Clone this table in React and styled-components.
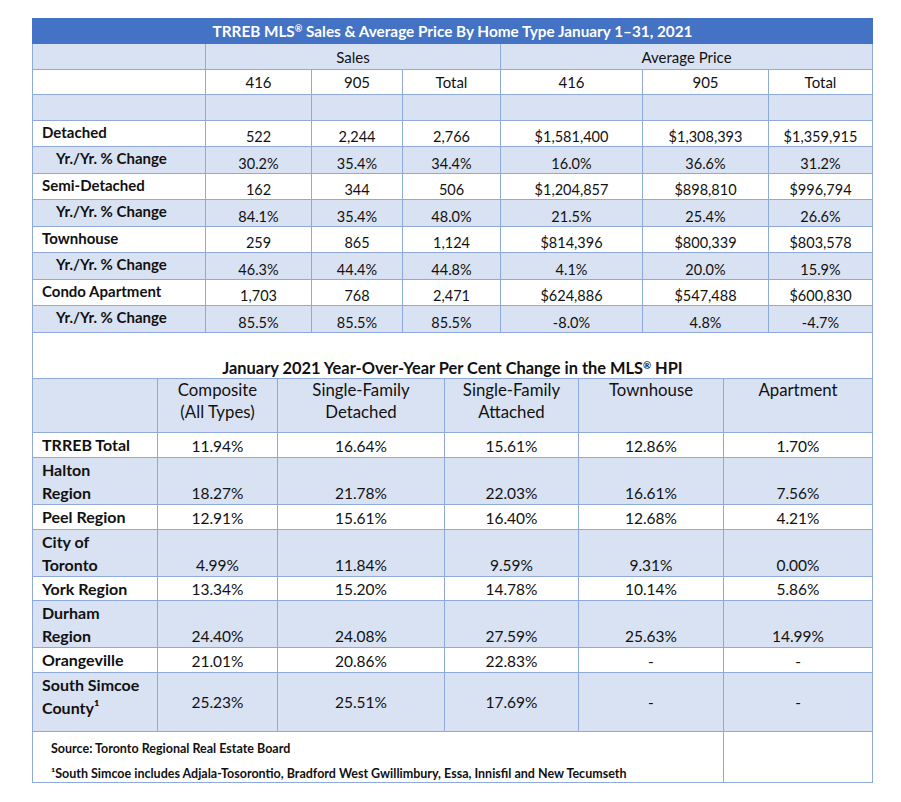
import styled, { createGlobalStyle } from "styled-components";

const GlobalStyle = createGlobalStyle`
  body {
    margin: 0;
    background: #ffffff;
    font-family: Lato, "Open Sans", sans-serif;
    color: #111111;
  }
`;

const salesRows = [
  { label: "Detached", values: ["522", "2,244", "2,766", "$1,581,400", "$1,308,393", "$1,359,915"] },
  { label: "Yr./Yr. % Change", sub: true, values: ["30.2%", "35.4%", "34.4%", "16.0%", "36.6%", "31.2%"] },
  { label: "Semi-Detached", values: ["162", "344", "506", "$1,204,857", "$898,810", "$996,794"] },
  { label: "Yr./Yr. % Change", sub: true, values: ["84.1%", "35.4%", "48.0%", "21.5%", "25.4%", "26.6%"] },
  { label: "Townhouse", values: ["259", "865", "1,124", "$814,396", "$800,339", "$803,578"] },
  { label: "Yr./Yr. % Change", sub: true, values: ["46.3%", "44.4%", "44.8%", "4.1%", "20.0%", "15.9%"] },
  { label: "Condo Apartment", values: ["1,703", "768", "2,471", "$624,886", "$547,488", "$600,830"] },
  { label: "Yr./Yr. % Change", sub: true, values: ["85.5%", "85.5%", "85.5%", "-8.0%", "4.8%", "-4.7%"] },
];

const hpiHeaders = [
  ["Composite", "(All Types)"],
  ["Single-Family", "Detached"],
  ["Single-Family", "Attached"],
  ["Townhouse"],
  ["Apartment"],
];

// heights are measured from grid line to grid line in the sheet
const hpiRows = [
  { label: ["TRREB Total"], h: 25, values: ["11.94%", "16.64%", "15.61%", "12.86%", "1.70%"] },
  { label: ["Halton", "Region"], h: 47, values: ["18.27%", "21.78%", "22.03%", "16.61%", "7.56%"] },
  { label: ["Peel Region"], h: 25, values: ["12.91%", "15.61%", "16.40%", "12.68%", "4.21%"] },
  { label: ["City of", "Toronto"], h: 47, values: ["4.99%", "11.84%", "9.59%", "9.31%", "0.00%"] },
  { label: ["York Region"], h: 24, values: ["13.34%", "15.20%", "14.78%", "10.14%", "5.86%"] },
  { label: ["Durham", "Region"], h: 47, values: ["24.40%", "24.08%", "27.59%", "25.63%", "14.99%"] },
  { label: ["Orangeville"], h: 25, values: ["21.01%", "20.86%", "22.83%", "-", "-"] },
  { label: ["South Simcoe", "County¹"], h: 59, middle: true, values: ["25.23%", "25.51%", "17.69%", "-", "-"] },
];

const salesCols = [173, 106, 91, 98, 142, 126, 104];
const hpiCols = [125, 120, 167, 134, 145, 149];

function App() {
  return (
    <Page>
      <GlobalStyle />
      <Sheet>
        <Table>
          <colgroup>
            {salesCols.map((w, i) => (
              <col key={i} style={{ width: w }} />
            ))}
          </colgroup>
          <tbody>
            <tr>
              <TitleCell colSpan={7}>
                TRREB MLS<Reg>®</Reg> Sales &amp; Average Price By Home Type January 1–31, 2021
              </TitleCell>
            </tr>
            <tr>
              <HeadCell $shade $h={26} />
              <HeadCell $shade $h={26} colSpan={3}>Sales</HeadCell>
              <HeadCell $shade $h={26} colSpan={3}>Average Price</HeadCell>
            </tr>
            <tr>
              <HeadCell $h={25} />
              {["416", "905", "Total", "416", "905", "Total"].map((t, i) => (
                <HeadCell key={i} $h={25}>{t}</HeadCell>
              ))}
            </tr>
            <tr>
              {salesCols.map((_, i) => (
                <HeadCell key={i} $shade $h={26} />
              ))}
            </tr>
            {salesRows.map((row, r) => (
              <tr key={r}>
                <LabelCell $shade={row.sub} $sub={row.sub} $h={row.sub ? 27 : 26}>
                  {row.label}
                </LabelCell>
                {row.values.map((v, i) => (
                  <ValueCell key={i} $shade={row.sub} $h={row.sub ? 27 : 26}>
                    {v}
                  </ValueCell>
                ))}
              </tr>
            ))}
          </tbody>
        </Table>

        <Table>
          <colgroup>
            {hpiCols.map((w, i) => (
              <col key={i} style={{ width: w }} />
            ))}
          </colgroup>
          <tbody>
            <tr>
              <SectionTitle colSpan={6}>
                January 2021 Year-Over-Year Per Cent Change in the MLS<Reg>®</Reg> HPI
              </SectionTitle>
            </tr>
            <tr>
              <HpiHead />
              {hpiHeaders.map((lines, i) => (
                <HpiHead key={i}>
                  {lines.map((l) => (
                    <Line key={l}>{l}</Line>
                  ))}
                </HpiHead>
              ))}
            </tr>
            {hpiRows.map((row, r) => (
              <tr key={r}>
                <AreaCell $shade={r % 2 === 1} $h={row.h}>
                  {row.label.map((l) => (
                    <Line key={l}>{l}</Line>
                  ))}
                </AreaCell>
                {row.values.map((v, i) => (
                  <PctCell key={i} $shade={r % 2 === 1} $h={row.h} $middle={row.middle}>
                    {v}
                  </PctCell>
                ))}
              </tr>
            ))}
            <tr>
              <NoteCell colSpan={5}>
                <Note>Source: Toronto Regional Real Estate Board</Note>
                <Note>¹South Simcoe includes Adjala-Tosorontio, Bradford West Gwillimbury, Essa, Innisfil and New Tecumseth</Note>
              </NoteCell>
              <NoteCell />
            </tr>
          </tbody>
        </Table>
      </Sheet>
    </Page>
  );
}

const Page = styled.div`
  padding: 18px 0 0 32px;
`;

const Sheet = styled.div`
  width: 840px;
`;

const Table = styled.table`
  width: 840px;
  table-layout: fixed;
  border-collapse: collapse;
`;

// collapsed borders add a pixel to each row, so take it off the height
const Cell = styled.td`
  border: 1px solid #8eaadb;
  padding: 0;
  height: ${(p) => (p.$h || 26) - 1}px;
  background: ${(p) => (p.$shade ? "#d9e2f3" : "#ffffff")};
  white-space: nowrap;
`;

const TitleCell = styled(Cell)`
  height: 24px;
  background: #4472c4;
  border-color: #4472c4;
  color: #ffffff;
  font-weight: 700;
  font-size: 15.3px;
  text-align: center;
  vertical-align: middle;
`;

const Reg = styled.sup`
  font-size: 0.6em;
  vertical-align: 0.55em;
  line-height: 0;
`;

const HeadCell = styled(Cell)`
  font-size: 15px;
  text-align: center;
  vertical-align: middle;
`;

const LabelCell = styled(Cell)`
  font-size: 15px;
  font-weight: 700;
  line-height: 22px;
  vertical-align: top;
  padding-left: ${(p) => (p.$sub ? 23 : 9)}px;
`;

const ValueCell = styled(Cell)`
  font-size: 14.5px;
  line-height: 19px;
  text-align: center;
  vertical-align: bottom;
`;

const SectionTitle = styled.td`
  height: 44px;
  padding: 0 0 1px;
  border-left: 1px solid #8eaadb;
  border-right: 1px solid #8eaadb;
  font-size: 16.4px;
  font-weight: 700;
  text-align: center;
  vertical-align: bottom;
  white-space: nowrap;
`;

const HpiHead = styled(Cell)`
  height: 53px;
  background: #d9e2f3;
  font-size: 16.8px;
  line-height: 22px;
  text-align: center;
  vertical-align: top;
`;

const Line = styled.div``;

const AreaCell = styled(Cell)`
  font-size: 16px;
  font-weight: 700;
  line-height: 23px;
  vertical-align: top;
  padding-left: 9px;
`;

const PctCell = styled(Cell)`
  font-size: 15.5px;
  line-height: 22px;
  text-align: center;
  vertical-align: ${(p) => (p.$middle ? "middle" : "bottom")};
`;

const NoteCell = styled(Cell)`
  height: 40px;
  vertical-align: top;
  padding: 9px 0 0 18px;
`;

const Note = styled.div`
  font-size: 12.5px;
  font-weight: 700;
  line-height: 16px;

  & + & {
    margin-top: 9px;
  }
`;

export default App;
